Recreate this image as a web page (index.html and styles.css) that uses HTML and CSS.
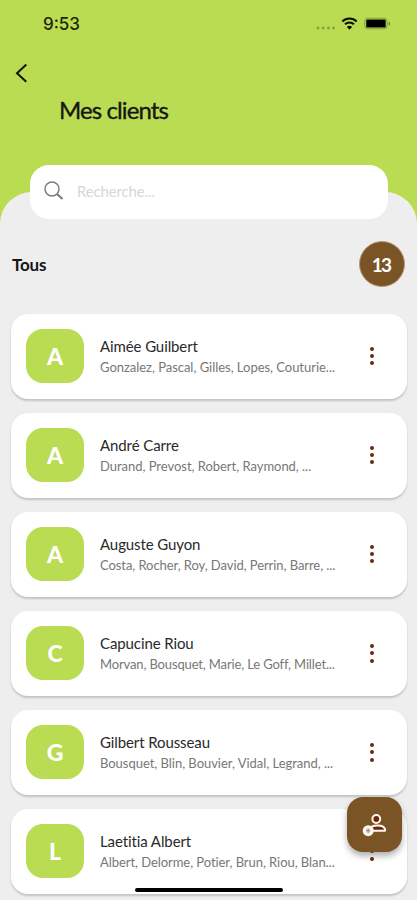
FILE: index.html
```html
<!DOCTYPE html>
<html lang="fr">
<head>
<meta charset="utf-8">
<meta name="viewport" content="width=device-width, initial-scale=1">
<title>Mes clients</title>
<link rel="stylesheet" href="styles.css">
</head>
<body>
<div class="app">
  <header class="header">
    <div class="status">
      <span class="time">9:53</span>
      <svg class="status-icons" width="76" height="18" viewBox="0 0 76 18">
        <g fill="#84a33a"><circle cx="2" cy="13" r="1.4"/><circle cx="7.200" cy="13" r="1.400"/><circle cx="12.400" cy="13" r="1.400"/><circle cx="17.600" cy="13" r="1.400"/></g>
        <g fill="none" stroke="#0b1002" stroke-width="2"><path d="M26.300 6.400a10.500 10.500 0 0 1 14.400 0"/><path d="M29 9.300a6.600 6.600 0 0 1 9 0"/></g>
        <path d="M33.500 14.800l-2.600-2.800a3.800 3.800 0 0 1 5.200 0z" fill="#0b1002"/>
        <rect x="48.700" y="3.200" width="22.300" height="10.600" rx="3" fill="none" stroke="#82a038"/>
        <rect x="50.200" y="4.600" width="19.500" height="8" rx="1.200" fill="#000"/>
        <path d="M72.600 6.500c2 .6 2 3.600 0 4.200z" fill="#688328"/>
      </svg>
    </div>
    <svg class="back" width="14" height="20" viewBox="0 0 14 20"><path d="M12.300 1.500L3 10.200l9.300 8.500" fill="none" stroke="#101402" stroke-width="2"/></svg>
    <h1 class="title">Mes clients</h1>
  </header>
  <main class="sheet">
    <div class="search">
      <svg width="20" height="20" viewBox="0 0 20 20" fill="none" stroke="#7d7d7d"><circle cx="8" cy="8" r="7" stroke-width="1.500"/><path d="M13 13l5.500 5" stroke-width="2.100"/></svg>
      <span class="placeholder">Recherche...</span>
    </div>
    <div class="summary"><h2 class="all">Tous</h2><span class="count">13</span></div>
    <ul class="list">
      <li class="card"><span class="avatar">A</span><div class="info"><p class="name">Aimée Guilbert</p><p class="people">Gonzalez, Pascal, Gilles, Lopes, Couturie...</p></div><span class="menu"><i></i><i></i><i></i></span></li>
      <li class="card"><span class="avatar">A</span><div class="info"><p class="name">André Carre</p><p class="people">Durand, Prevost, Robert, Raymond, ...</p></div><span class="menu"><i></i><i></i><i></i></span></li>
      <li class="card"><span class="avatar">A</span><div class="info"><p class="name">Auguste Guyon</p><p class="people">Costa, Rocher, Roy, David, Perrin, Barre, ...</p></div><span class="menu"><i></i><i></i><i></i></span></li>
      <li class="card"><span class="avatar">C</span><div class="info"><p class="name">Capucine Riou</p><p class="people">Morvan, Bousquet, Marie, Le Goff, Millet...</p></div><span class="menu"><i></i><i></i><i></i></span></li>
      <li class="card"><span class="avatar">G</span><div class="info"><p class="name">Gilbert Rousseau</p><p class="people">Bousquet, Blin, Bouvier, Vidal, Legrand, ...</p></div><span class="menu"><i></i><i></i><i></i></span></li>
      <li class="card"><span class="avatar">L</span><div class="info"><p class="name">Laetitia Albert</p><p class="people">Albert, Delorme, Potier, Brun, Riou, Blan...</p></div><span class="menu"><i></i><i></i><i></i></span></li>
    </ul>
  </main>
  <div class="fab">
    <svg width="28" height="26" viewBox="0 0 28 26"><circle cx="15.300" cy="7" r="3.900" fill="#6b260c" stroke="#fff8ef" stroke-width="2"/><path d="M9 18.700v-1.500c1.500-4.800 13.500-4.800 15 0v1.500z" fill="#6b260c" stroke="#fff8ef" stroke-width="2" stroke-linejoin="round"/><circle cx="7.200" cy="18.700" r="5.500" fill="#fff8ef"/><path d="M5 18.700h4.400M7.200 16.500v4.400" stroke="#a89a8d" stroke-width="1.700"/></svg>
  </div>
  <div class="home"></div>
</div>
</body>
</html>
```
FILE: styles.css
```css
* { box-sizing: border-box; }
body { margin: 0; font-family: Lato, "Liberation Sans", sans-serif; color: #161616; font-variant-ligatures: none; }
h1, h2, p, ul { margin: 0; padding: 0; font-weight: 400; }
.app { position: relative; width: 417px; height: 900px; overflow: hidden; background: #b9dc53; }
.header { height: 192px; padding-top: 14px; }
.status { display: flex; justify-content: space-between; align-items: center; height: 20px; padding: 0 25px 0 43px; }
.time { font: 500 17px/20px Inter, sans-serif; color: #1d260a; }
.status-icons { display: block; }
.back { display: block; margin: 29px 0 0 14px; }
.title { margin: 12px 0 0 59px; font-size: 24px; line-height: 30px; font-weight: 400; letter-spacing: -.9px; -webkit-text-stroke: .35px; }
.sheet { height: 708px; padding: 0 10px 0 11px; border-radius: 32px 32px 0 0; background: #eee; display: flow-root; }
.search { display: flex; align-items: center; gap: 13px; width: 358px; height: 54px; margin: -27px 0 0 19px; padding: 0 0 2px 14px; border-radius: 19px; background: #fff; }
.placeholder { font-size: 15px; letter-spacing: -.15px; color: #d7d7d7; }
.summary { display: flex; justify-content: space-between; align-items: center; margin-top: 22px; padding: 0 2px 0 1px; height: 46px; }
.all { font-size: 17px; font-weight: 700; letter-spacing: -.2px; }
.count { display: flex; align-items: center; justify-content: center; width: 46px; height: 46px; border: 1.500px solid #b39a78; border-radius: 50%; background: #7b5426; color: #fff; font-size: 19px; font-weight: 700; letter-spacing: -1.800px; padding-right: 2px; }
.list { display: grid; gap: 14.100px; margin-top: 26.500px; list-style: none; }
.card { display: flex; align-items: center; height: 85px; padding: 0 30px 0 15px; border-radius: 17px; background: #fff; box-shadow: 0 1.500px 2px #0000002e; }
.avatar { display: flex; align-items: center; justify-content: center; width: 58px; height: 54px; border-radius: 17px; background: #b9dc53; color: #fff; font-size: 23px; font-weight: 900; }
.info { flex: 1; margin-left: 16px; padding-top: 2px; white-space: nowrap; }
.name { font-size: 15px; line-height: 21px; letter-spacing: -.1px; color: #292929; }
.people { font-size: 13px; line-height: 21px; letter-spacing: -.03px; color: #777; }
.card:nth-child(3) .people { letter-spacing: -.07px; }
.card:nth-child(4) .people { letter-spacing: -.14px; }
.card:nth-child(6) .people { letter-spacing: -.06px; }
.menu { display: grid; gap: 3.300px; width: 10px; justify-items: center; }
.menu i { width: 4px; height: 4px; border-radius: 50%; background: #6b2a10; }
.fab { position: absolute; left: 347px; top: 797px; width: 55px; height: 55px; display: grid; place-items: center; border-radius: 16px; background: #7b5426; box-shadow: 0 4px 6px #00000050; }
.home { position: absolute; left: 135px; top: 888px; width: 148px; height: 4px; border-radius: 2px; background: #000; }
```
